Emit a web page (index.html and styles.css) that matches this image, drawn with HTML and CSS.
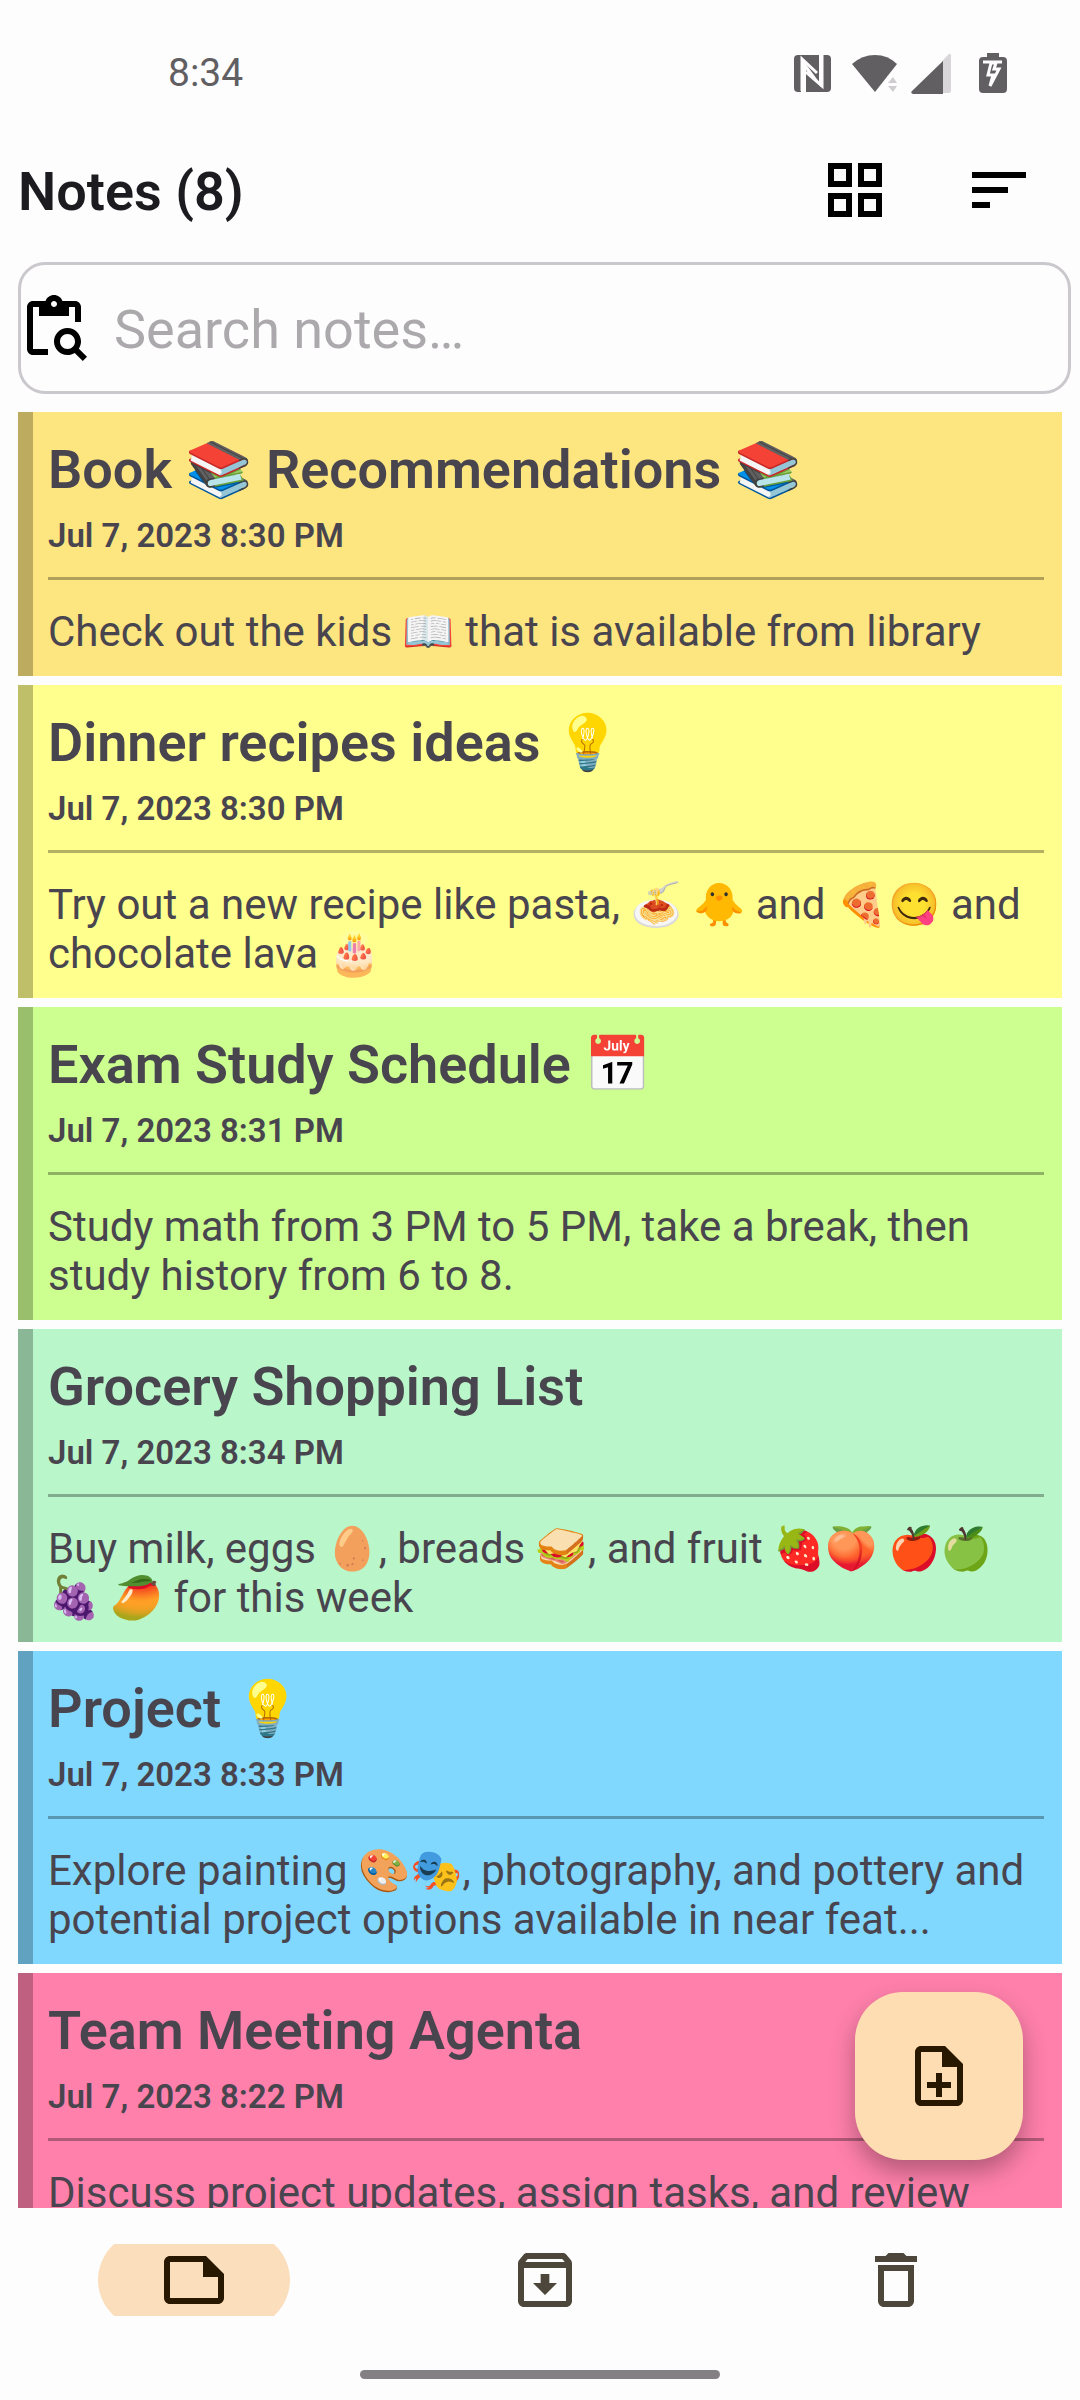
FILE: index.html
```html
<!DOCTYPE html>
<html lang="en">
<head>
    <meta charset="UTF-8">
    <meta name="viewport" content="width=device-width, initial-scale=1.0">
    <title>Notes</title>
    <link rel="stylesheet" href="styles.css">
</head>
<body>
    <div class="status-bar">
        <span class="clock">8:34</span>
        <div class="status-icons">
            <svg width="38" height="42" viewBox="0 0 38 42" fill="#625f63">
                <path d="M5 3h21v27L10 8H8v32H5q-4 0-4-4V7q0-4 4-4zM29 3h5q4 0 4 4v29q0 4-4 4H13V18l15 17h1z"/>
                <path d="M9 39V7l15 14M13 20l16 14V3" fill="none" stroke="#fefdfe" stroke-width="3"/>
            </svg>
            <svg class="wifi" width="46" height="42" viewBox="0 0 46 42">
                <path fill="#625f63" d="M0 12Q10 3 23 3t22 9L23 40z"/>
                <path fill="#fefdfe" d="M35 25l5-5h6v22H35z"/>
                <path fill="#cfcdd0" d="M36 31l5-6 4 6zM36 34h9l-4 6z"/>
            </svg>
            <svg class="signal" width="40" height="42" viewBox="0 0 40 42">
                <path fill="#d8d6d9" d="M31 9l7-7q2-1 2 2v35q0 2-2 2h-7z"/>
                <path fill="#625f63" d="M32 9v33H2q-3-1-1-3z"/>
            </svg>
            <svg class="battery" width="28" height="42" viewBox="0 0 28 42">
                <path fill="#625f63" d="M8 1h12v4h4q4 0 4 4v28q0 4-4 4H4q-4 0-4-4V9q0-4 4-4h4z"/>
                <path fill="none" stroke="#fefdfe" stroke-width="3" d="M4 10h19M12 11l-3 12h5l-3 11 9-17h-5l2-6z"/>
            </svg>
        </div>
    </div>

    <header class="top-bar">
        <h1>Notes (8)</h1>
        <button class="icon-btn" aria-label="Grid view">
            <svg class="icon" viewBox="0 0 24 24"><path d="M3 3v8h8V3H3zm6 6H5V5h4v4zm-6 4v8h8v-8H3zm6 6H5v-4h4v4zm4-16v8h8V3h-8zm6 6h-4V5h4v4zm-6 4v8h8v-8h-8zm6 6h-4v-4h4v4z"/></svg>
        </button>
        <button class="icon-btn" aria-label="Sort">
            <svg class="icon" viewBox="0 0 24 24"><path d="M3 18h6v-2H3v2zM3 6v2h18V6H3zm0 7h12v-2H3v2z"/></svg>
        </button>
    </header>

    <label class="search">
        <svg class="icon" viewBox="0 0 24 24">
            <path d="M5 5h2v3h10V5h2v5h2V5c0-1.1-.9-2-2-2h-4.18C14.4 1.84 13.3 1 12 1s-2.4.84-2.82 2H5c-1.1 0-2 .9-2 2v14c0 1.1.9 2 2 2h5v-2H5V5zm7-2c.55 0 1 .45 1 1s-.45 1-1 1-1-.45-1-1 .45-1 1-1z"/>
            <path d="M20.3 18.9c.4-.7.7-1.5.7-2.4 0-2.5-2-4.5-4.5-4.5S12 14 12 16.5s2 4.5 4.5 4.5c.9 0 1.7-.3 2.4-.7l2.7 2.7 1.4-1.4-2.7-2.7zm-3.8.1c-1.4 0-2.5-1.1-2.5-2.5s1.1-2.5 2.5-2.5 2.5 1.1 2.5 2.5-1.1 2.5-2.5 2.5z"/>
        </svg>
        <input type="text" placeholder="Search notes…" aria-label="Search notes">
    </label>

    <main class="notes">
        <article class="note amber">
            <h2>Book 📚 Recommendations 📚</h2>
            <time>Jul 7, 2023 8:30 PM</time>
            <p>Check out the kids 📖 that is available from library</p>
        </article>
        <article class="note yellow">
            <h2>Dinner recipes ideas 💡</h2>
            <time>Jul 7, 2023 8:30 PM</time>
            <p>Try out a new recipe like pasta, 🍝 🐥 and 🍕😋 and chocolate lava 🎂</p>
        </article>
        <article class="note lime">
            <h2>Exam Study Schedule 📅</h2>
            <time>Jul 7, 2023 8:31 PM</time>
            <p>Study math from 3 PM to 5 PM, take a break, then study history from 6 to 8.</p>
        </article>
        <article class="note green">
            <h2>Grocery Shopping List</h2>
            <time>Jul 7, 2023 8:34 PM</time>
            <p>Buy milk, eggs 🥚, breads 🥪, and fruit 🍓🍑 🍎🍏🍇 🥭 for this week</p>
        </article>
        <article class="note blue">
            <h2>Project 💡</h2>
            <time>Jul 7, 2023 8:33 PM</time>
            <p>Explore painting 🎨🎭, photography, and pottery and potential project options available in near feat...</p>
        </article>
        <article class="note pink">
            <h2>Team Meeting Agenta</h2>
            <time>Jul 7, 2023 8:22 PM</time>
            <p>Discuss project updates, assign tasks, and review</p>
        </article>
        <button class="fab" aria-label="New note">
            <svg class="icon" viewBox="0 0 24 24"><path d="M14 2H6c-1.1 0-2 .9-2 2v16c0 1.1.9 2 2 2h12c1.1 0 2-.9 2-2V8l-6-6zm4 18H6V4h7v5h5v11zm-7-9h2v3h3v2h-3v3h-2v-3H8v-2h3z"/></svg>
        </button>
    </main>

    <nav class="bottom-nav">
        <a href="#notes" class="active" aria-label="Notes">
            <svg class="icon" viewBox="0 0 24 24"><path d="M16 4H4c-1.1 0-2 .9-2 2v12c0 1.1.9 2 2 2h16c1.1 0 2-.9 2-2v-8l-6-6zM4 18V6h11v5h5v7H4z"/></svg>
        </a>
        <a href="#archive" aria-label="Archive">
            <svg class="icon" viewBox="0 0 24 24"><path d="M20.54 5.23l-1.39-1.68C18.88 3.21 18.47 3 18 3H6c-.47 0-.88.21-1.16.55L3.46 5.23C3.17 5.57 3 6.02 3 6.5V19c0 1.1.9 2 2 2h14c1.1 0 2-.9 2-2V6.5c0-.48-.17-.93-.46-1.27zM6.24 5h11.52l.83 1H5.42l.82-1zM5 19V8h14v11H5zm8.45-9h-2.9v3H8l4 4 4-4h-2.55z"/></svg>
        </a>
        <a href="#trash" aria-label="Trash">
            <svg class="icon" viewBox="0 0 24 24"><path d="M16 9v10H8V9h8m-1.5-6h-5l-1 1H5v2h14V4h-3.5l-1-1zM18 7H6v12c0 1.1.9 2 2 2h8c1.1 0 2-.9 2-2V7z"/></svg>
        </a>
    </nav>
    <div class="home-indicator"></div>
</body>
</html>
```

FILE: styles.css
```css
* {
    box-sizing: border-box;
}
body {
    margin: 0;
    height: 100vh;
    display: flex;
    flex-direction: column;
    background: #fefdfe;
    color: #1c1b1f;
    font-family: Roboto, "Noto Color Emoji", sans-serif;
}
h1, h2, p {
    margin: 0;
}
button {
    padding: 0;
    border: none;
    background: none;
    cursor: pointer;
}
.icon {
    display: block;
    width: 72px;
    height: 72px;
    fill: currentColor;
}

/* status bar */
.status-bar {
    flex: none;
    height: 118px;
    padding: 28px 73px 0 168px;
    display: flex;
    align-items: center;
    justify-content: space-between;
}
.clock {
    font-size: 39px;
    color: #625f63;
}
.status-icons {
    display: flex;
}
.wifi {
    margin-left: 21px;
}
.signal {
    margin-left: 13px;
}
.battery {
    margin-left: 28px;
}

/* header */
.top-bar {
    flex: none;
    display: flex;
    align-items: center;
    padding: 0 9px 0 18px;
}
.top-bar h1 {
    flex: 1;
    padding-top: 3px;
    font-size: 54px;
    font-weight: 600;
}
.icon-btn {
    width: 144px;
    height: 144px;
    display: grid;
    place-items: center;
    color: #000;
}
.search {
    flex: none;
    display: flex;
    align-items: center;
    height: 132px;
    margin: 0 9px 18px 18px;
    border: 3px solid #cac8cc;
    border-radius: 27px;
    color: #000;
}
.search .icon {
    flex: none;
    margin-left: -3px;
}
.search input {
    flex: 1;
    min-width: 0;
    margin-left: 24px;
    padding: 3px 0 0;
    border: none;
    outline: none;
    background: none;
    font: inherit;
    font-size: 54px;
}
.search input::placeholder {
    color: #aba9ac;
}

/* notes */
.notes {
    position: relative;
    flex: 1;
    min-height: 0;
    overflow: hidden;
    padding: 0 18px;
}
.note {
    margin-bottom: 9px;
    padding: 26px 18px 20px 15px;
    border-left: 15px solid rgba(0, 0, 0, 0.25);
    color: #49454f;
}
.note h2 {
    font-size: 54px;
    font-weight: 600;
    line-height: 64px;
}
.note time {
    display: block;
    margin-top: 14px;
    padding-bottom: 22px;
    border-bottom: 3px solid rgba(0, 0, 0, 0.3);
    font-size: 33px;
    font-weight: 600;
    line-height: 39px;
}
.note p {
    margin-top: 27px;
    font-size: 42px;
    line-height: 49px;
}
.amber {
    background-color: #fde580;
}
.yellow {
    background-color: #ffff8d;
}
.lime {
    background-color: #ccff90;
}
.green {
    background-color: #b9f6ca;
}
.blue {
    background-color: #80d8ff;
}
.pink {
    background-color: #ff80ab;
}
.fab {
    position: absolute;
    right: 57px;
    bottom: 48px;
    width: 168px;
    height: 168px;
    display: grid;
    place-items: center;
    border-radius: 48px;
    background: #ffddb3;
    color: #291800;
    box-shadow: 0 12px 24px rgba(0, 0, 0, 0.3);
}

/* bottom navigation */
.bottom-nav {
    flex: none;
    display: flex;
    padding: 36px 9px 36px 18px;
}
.bottom-nav a {
    flex: 1;
    height: 72px;
    display: flex;
    align-items: center;
    justify-content: center;
    overflow: hidden;
    color: #4c473a;
}
.bottom-nav .active {
    color: #291800;
}
.bottom-nav .active .icon {
    box-sizing: content-box;
    padding: 12px 60px;
    border-radius: 48px;
    background: #fbdebc;
}
.home-indicator {
    flex: none;
    width: 360px;
    height: 9px;
    margin: 18px auto 21px;
    border-radius: 5px;
    background: #837f83;
}
```
